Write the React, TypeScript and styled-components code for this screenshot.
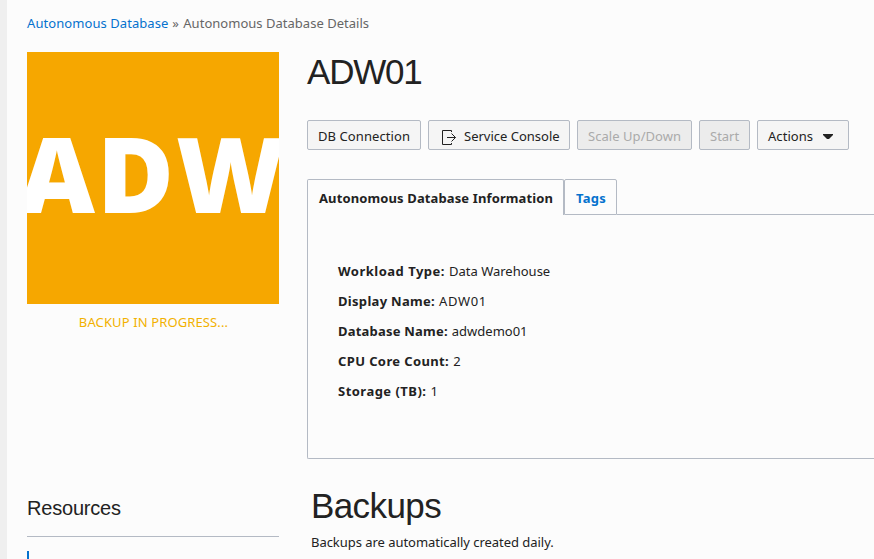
import React from 'react';
import styled, { createGlobalStyle } from 'styled-components';

const GlobalStyle = createGlobalStyle`
  * { box-sizing: border-box; }
  html, body { margin: 0; background: #fcfcfc; }
  body {
    overflow: hidden;
    font-family: "Noto Sans", "Open Sans", sans-serif;
    font-size: 13px;
    line-height: 20px;
    color: #222;
  }
`;

const Page = styled.div`
  width: 100%;
  height: 559px;
  overflow: hidden;
  border-left: 7px solid #efefef;
  padding: 13px 0 0 20px;
`;

const Text = styled.span<{ $spacing?: number }>`
  white-space: pre;
  letter-spacing: ${(p) => p.$spacing ?? 0}px;
`;

const Breadcrumb = styled.nav`
  height: 39px;
  color: #666;
  white-space: pre;
`;

const Crumb = styled.a`
  color: #0572ce;
`;

const Columns = styled.div`
  display: grid;
  grid-template-columns: 252px 1fr;
  column-gap: 28px;
`;

const Side = styled.aside`
  display: flex;
  flex-direction: column;
`;

const Tile = styled.div`
  display: flex;
  align-items: center;
  justify-content: center;
  height: 252px;
  padding-bottom: 11px;
  overflow: hidden;
  background: #f6a700;
  color: #fff;
`;

const TileName = styled.span`
  flex: none;
  font: 800 105px/150px "Open Sans", sans-serif;
  letter-spacing: 2px;
  white-space: nowrap;
`;

const Status = styled.div`
  height: 186px;
  padding: 8px 0 0 1px;
  text-align: center;
  color: #f2b100;
`;

const SideTitle = styled.h2`
  height: 47px;
  margin: 0;
  padding-top: 6px;
  border-bottom: 1px solid #b4bac4;
  font: 400 20px/24px "Liberation Sans", Arial, sans-serif;
`;

const SideMarker = styled.div`
  width: 2px;
  height: 30px;
  margin-top: 14px;
  background: #0572ce;
`;

const Main = styled.main`
  min-width: 0;
`;

const Title = styled.h1`
  height: 68px;
  margin: 0;
  font: 400 35px/39px "Liberation Sans", Arial, sans-serif;
`;

const Toolbar = styled.div`
  display: flex;
  gap: 7px;
  height: 59px;
`;

const Button = styled.button<{ $width: number }>`
  display: flex;
  align-items: center;
  flex: none;
  width: ${(p) => p.$width}px;
  height: 30px;
  padding: 1px 0 0 10px;
  border: 1px solid #b4bac4;
  border-radius: 2px;
  background: #f5f5f5;
  color: #222;
  font: inherit;
  &:disabled {
    background: #ececec;
    color: #aaa;
  }
`;

const ExitIcon = styled.svg`
  margin: 2px 7px 0 2px;
  flex: none;
`;

const Caret = styled.svg`
  margin: 2px 0 0 10px;
  flex: none;
`;

const Tabs = styled.div`
  display: flex;
  height: 36px;
`;

const Tab = styled.div<{ $width: number; $active?: boolean }>`
  flex: none;
  width: ${(p) => p.$width}px;
  padding: 8px 0 0 11px;
  border: 1px solid #b4bac4;
  border-bottom-width: ${(p) => (p.$active ? 0 : 1)}px;
  border-radius: 2px 2px 0 0;
  color: ${(p) => (p.$active ? '#222' : '#0572ce')};
  font-weight: 700;
`;

const TabRule = styled.div`
  flex: 1;
  border-bottom: 1px solid #b4bac4;
`;

const Panel = styled.dl`
  display: flex;
  flex-direction: column;
  gap: 10px;
  height: 244px;
  margin: 0;
  padding: 46px 0 0 30px;
  border: solid #b4bac4;
  border-width: 0 0 1px 1px;
  border-bottom-left-radius: 2px;
`;

const Field = styled.div`
  display: flex;
  gap: 4px;
  height: 20px;
`;

const Label = styled.dt`
  font-weight: 700;
`;

const Value = styled.dd`
  margin: 0;
`;

const Section = styled.section`
  padding: 27px 0 0 4px;
`;

const SectionTitle = styled.h2`
  height: 46px;
  margin: 0;
  font: 400 35px/39px "Liberation Sans", Arial, sans-serif;
`;

const fields = [
  { label: 'Workload Type:', value: 'Data Warehouse', labelSpacing: 0.5, valueSpacing: 0 },
  { label: 'Display Name:', value: 'ADW01', labelSpacing: 0.31, valueSpacing: 0.6 },
  { label: 'Database Name:', value: 'adwdemo01', labelSpacing: 0.21, valueSpacing: 0 },
  { label: 'CPU Core Count:', value: '2', labelSpacing: 0.38, valueSpacing: 0 },
  { label: 'Storage (TB):', value: '1', labelSpacing: 0.48, valueSpacing: 0 },
];

export default function App() {
  return (
    <Page>
      <GlobalStyle />
      <Breadcrumb>
        <Crumb><Text $spacing={0.07}>Autonomous Database</Text></Crumb>
        <Text $spacing={0.5}> » </Text>
        <Text $spacing={0.02}>Autonomous Database Details</Text>
      </Breadcrumb>
      <Columns>
        <Side>
          <Tile><TileName>ADW</TileName></Tile>
          <Status><Text $spacing={0.12}>BACKUP IN PROGRESS...</Text></Status>
          <SideTitle><Text $spacing={-0.2}>Resources</Text></SideTitle>
          <SideMarker />
        </Side>
        <Main>
          <Title><Text $spacing={-1.2}>ADW01</Text></Title>
          <Toolbar>
            <Button $width={114}><Text $spacing={0.08}>DB Connection</Text></Button>
            <Button $width={142}>
              <ExitIcon width="16" height="16" viewBox="0 0 16 16" fill="none" stroke="#222" strokeWidth="1">
                <path d="M10.5 3V1.5H1.5V15.5H10.5V14M6 8.5H14.5M10.5 4.5L14.5 8.5L10.5 12.5" />
              </ExitIcon>
              <Text>Service Console</Text>
            </Button>
            <Button $width={115} disabled><Text $spacing={0.05}>Scale Up/Down</Text></Button>
            <Button $width={51} disabled><Text>Start</Text></Button>
            <Button $width={92}>
              <Text $spacing={0.05}>Actions</Text>
              <Caret width="10" height="5" viewBox="0 0 10 5"><path d="M0 0H10V1L6 5H4L0 1Z" fill="#222" /></Caret>
            </Button>
          </Toolbar>
          <Tabs>
            <Tab $width={257} $active><Text $spacing={0.12}>Autonomous Database Information</Text></Tab>
            <Tab $width={53}><Text $spacing={0.3}>Tags</Text></Tab>
            <TabRule />
          </Tabs>
          <Panel>
            {fields.map((f) => (
              <Field key={f.label}>
                <Label><Text $spacing={f.labelSpacing}>{f.label}</Text></Label>
                <Value><Text $spacing={f.valueSpacing}>{f.value}</Text></Value>
              </Field>
            ))}
          </Panel>
          <Section>
            <SectionTitle><Text $spacing={-0.6}>Backups</Text></SectionTitle>
            <Text $spacing={-0.04}>Backups are automatically created daily.</Text>
          </Section>
        </Main>
      </Columns>
    </Page>
  );
}
